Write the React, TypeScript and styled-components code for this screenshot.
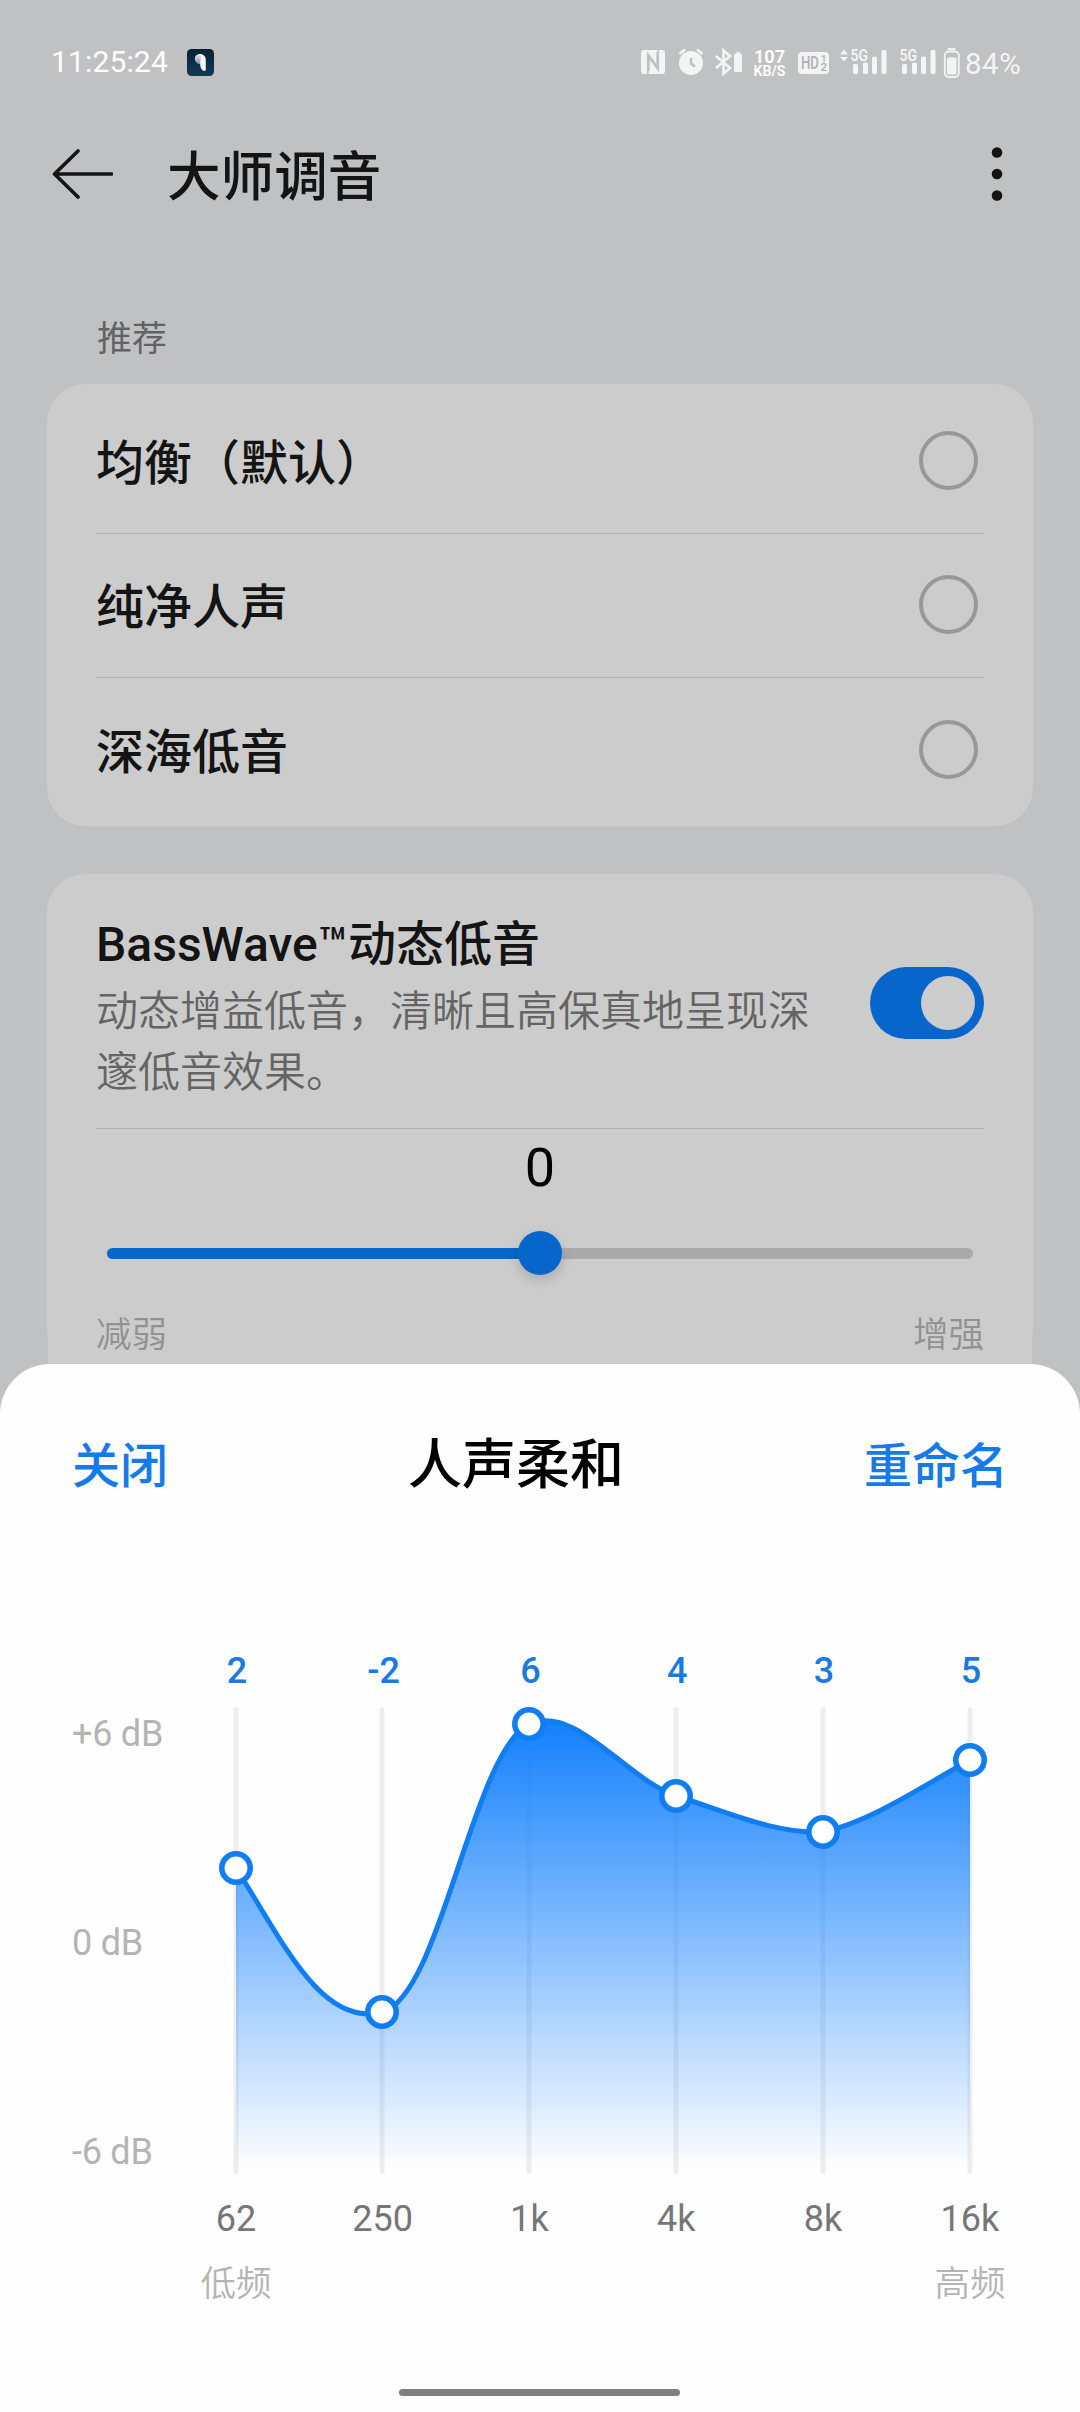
import React from 'react';
import styled, { createGlobalStyle } from 'styled-components';

const GlobalStyle = createGlobalStyle`
  * { box-sizing: border-box; }
  body {
    margin: 0;
    font-family: Roboto, 'Noto Sans CJK SC', sans-serif;
    -webkit-font-smoothing: antialiased;
  }
`;

const Screen = styled.div`
  position: relative;
  width: 1080px;
  height: 2412px;
  overflow: hidden;
  background: #c0c1c3;
  color: #141414;
`;

const StatusBar = styled.header`
  display: flex;
  align-items: center;
  height: 124px;
  padding: 0 50px 0 51px;
  color: #fff;
`;

const Clock = styled.span`
  width: 136px;
  font-size: 30px;
  letter-spacing: 0.15px;
  line-height: 36px;
  white-space: nowrap;
`;

const StatusIcons = styled.div`
  display: flex;
  align-items: center;
  margin-left: auto;
`;

const BatteryLevel = styled.span`
  width: 66px;
  padding: 4px 0 0 1px;
  color: #f3f4f4;
  font-size: 29.5px;
  letter-spacing: 0.5px;
  line-height: 36px;
  white-space: nowrap;
`;

const TopBar = styled.div`
  display: flex;
  align-items: center;
  height: 100px;
  padding: 0 59px 0 51px;
`;

const PageTitle = styled.h1`
  margin: 0 auto 0 54px;
  padding-top: 8px;
  font-size: 53.6px;
  font-weight: 500;
  line-height: 80px;
`;

const SectionLabel = styled.div`
  padding: 90px 0 0 97px;
  height: 160px;
  color: #626364;
  font-size: 35px;
  line-height: 52px;
`;

const Card = styled.section`
  margin: 0 47px;
  background: #ccc;
  border-radius: 38px;
`;

const PresetCard = styled(Card)`
  height: 442px;
  padding: 6px 49px 4px;
`;

const PresetRow = styled.div`
  display: flex;
  align-items: center;
  justify-content: space-between;
  height: 144px;
  padding: 0 6px 5px 0;
  border-bottom: 1px solid #b2b2b2;
  font-size: 48px;
  font-weight: 500;

  &:last-child {
    border-bottom: 0;
  }
`;

const Radio = styled.span`
  width: 59px;
  height: 59px;
  margin-top: 3px;
  border: 4px solid #989898;
  border-radius: 50%;
`;

const BassCard = styled(Card)`
  margin-top: 48px;
`;

const BassHeader = styled.div`
  display: flex;
  align-items: center;
  justify-content: space-between;
  height: 255px;
  margin: 0 49px;
  padding-top: 3px;
  border-bottom: 1px solid #b2b2b2;
`;

const BassText = styled.div`
  width: 722px;
  padding-top: 7px;
`;

const BassTitle = styled.div`
  font-size: 48px;
  font-weight: 500;
  line-height: 72px;
  white-space: nowrap;
`;

const BassDescription = styled.div`
  color: #646464;
  font-size: 42px;
  font-weight: 350;
  line-height: 61px;
`;

const Switch = styled.span`
  display: flex;
  justify-content: flex-end;
  width: 114px;
  height: 72px;
  padding: 9px;
  border-radius: 36px;
  background: #0766cc;
`;

const SwitchKnob = styled.span`
  width: 54px;
  height: 54px;
  border-radius: 50%;
  background: #ccc;
`;

const SliderPanel = styled.div`
  margin: 0 1px;
  padding: 0 48px;
  height: 240px;
  background: #ccc;
`;

const SliderValue = styled.div`
  height: 102px;
  padding-top: 7px;
  color: #000;
  font-size: 54px;
  line-height: 64px;
  text-align: center;
`;

const SliderTrack = styled.div`
  display: flex;
  align-items: center;
  height: 44px;
  margin: 0 11px;
`;

const TrackPart = styled.span<{ $filled?: boolean }>`
  flex: 1;
  height: 11px;
  border-radius: ${(p) => (p.$filled ? '6px 0 0 6px' : '0 6px 6px 0')};
  background: ${(p) => (p.$filled ? '#0766cc' : '#aaa')};
`;

const SliderThumb = styled.span`
  z-index: 1;
  width: 44px;
  height: 44px;
  margin: 0 -2px;
  border-radius: 50%;
  background: #0766cc;
  box-shadow: 0 5px 12px rgba(0, 0, 0, 0.16);
`;

const SliderEnds = styled.div`
  display: flex;
  justify-content: space-between;
  padding-top: 33px;
  color: #919191;
  font-size: 35.5px;
  font-weight: 350;
  line-height: 54px;
`;

const Sheet = styled.section`
  position: absolute;
  left: 0;
  right: 0;
  bottom: 0;
  z-index: 2;
  display: flex;
  flex-direction: column;
  height: 1048px;
  border-radius: 50px 50px 0 0;
  background: #fefefe;
`;

const SheetHeader = styled.div`
  display: flex;
  align-items: center;
  justify-content: space-between;
  height: 200px;
  padding: 0 72px 5px;
`;

const SheetTitle = styled.h2`
  margin: -2px 0 0;
  color: #000;
  font-size: 54px;
  font-weight: 500;
`;

const TextButton = styled.button`
  padding: 0;
  border: 0;
  background: none;
  color: #147be8;
  font-family: inherit;
  font-size: 48px;
  font-weight: 500;
`;

const Equalizer = styled.div`
  display: grid;
  grid-template-columns: 91px 881px;
  padding: 86px 0 0 72px;
`;

const BandRow = styled.div`
  grid-column: 2;
  display: grid;
  grid-template-columns: repeat(6, 146.8px);
  text-align: center;
`;

const GainRow = styled(BandRow)`
  height: 50px;
  padding-left: 0.5px;
  color: #1a7ae2;
  font-size: 36px;
  font-weight: 500;
  line-height: 42px;
`;

const Scale = styled.div`
  display: flex;
  flex-direction: column;
  justify-content: space-between;
  height: 460px;
  margin-top: 13px;
  color: #b4b4b4;
  font-size: 36px;
  letter-spacing: -0.25px;
  line-height: 42px;
  white-space: nowrap;
`;

const FrequencyRow = styled(BandRow)`
  margin: 20px 0 0 -0.5px;
  color: #767676;
  font-size: 36px;
  line-height: 42px;
`;

const RangeRow = styled(BandRow)`
  margin: 17px 0 0 -0.5px;
  color: #b4b4b4;
  font-size: 35.5px;
  font-weight: 350;
  line-height: 54px;
`;

const HomeIndicator = styled.div`
  width: 281px;
  height: 7px;
  margin: auto 400px 16px 399px;
  border-radius: 4px;
  background: #7f7f7f;
`;

const presets = ['均衡（默认）', '纯净人声', '深海低音'];

const bands = [
  { frequency: '62', gain: 2, range: '低频' },
  { frequency: '250', gain: -2, range: '' },
  { frequency: '1k', gain: 6, range: '' },
  { frequency: '4k', gain: 4, range: '' },
  { frequency: '8k', gain: 3, range: '' },
  { frequency: '16k', gain: 5, range: '高频' },
];

const bandX = (i: number) => Math.floor(73 + i * 146.8);
const gainY = (gain: number) => 24 + (6 - gain) * 36;

const curve =
  'M73 168 C120 242 159 328 219 312 C278 297 309 53 366 24 ' +
  'C413 4 462 78 513 96 C562 111 611 134 660 132 C709 121 758 87 807 60';

function EqualizerChart() {
  return (
    <svg width="881" height="478" viewBox="0 0 881 478">
      <defs>
        <linearGradient id="area" gradientUnits="userSpaceOnUse" x1="0" y1="18" x2="0" y2="470">
          <stop offset="0" stopColor="#1280fc" />
          <stop offset="1" stopColor="#1280ff" stopOpacity="0" />
        </linearGradient>
      </defs>
      {bands.map((b, i) => (
        <rect key={b.frequency} x={bandX(i) - 2.5} y="7" width="5" height="467" rx="2.5" fill="#eee" />
      ))}
      <path d={`${curve} V474 H73 Z`} fill="url(#area)" />
      <path d={curve} fill="none" stroke="#107ef2" strokeWidth="5" />
      {bands.map((b, i) => (
        <circle
          key={b.frequency}
          cx={bandX(i)}
          cy={gainY(b.gain)}
          r="14.2"
          fill="#fff"
          stroke="#107ef2"
          strokeWidth="5.6"
        />
      ))}
    </svg>
  );
}

function EarbudBadge() {
  return (
    <svg width="27" height="27" viewBox="0 0 27 27">
      <defs>
        <linearGradient id="badge" x1="0" y1="0" x2="0" y2="1">
          <stop offset="0" stopColor="#092234" />
          <stop offset="1" stopColor="#12395a" />
        </linearGradient>
        <linearGradient id="bud" x1="0" y1="0" x2="0" y2="1">
          <stop offset="0" stopColor="#e6edf5" />
          <stop offset="1" stopColor="#7d94ad" />
        </linearGradient>
      </defs>
      <rect width="27" height="27" rx="4.5" fill="url(#badge)" />
      <path d="M13 5 C9.500 5 7.800 7.500 7.800 9.800 C7.800 12.500 10.500 15.300 13.800 15.300 V5 Z" fill="url(#bud)" />
      <path d="M12 5 C16 4.500 18.800 7 18.800 11 V20.500 Q18.800 22 17.300 22 C14.300 21.300 13 18 13.200 14 C13.300 10 14.500 7 12 5 Z" fill="#f3f6fb" />
    </svg>
  );
}

/* System indicators, drawn on one strip so their spacing stays fixed. */
function SystemIndicators() {
  return (
    <svg width="326" height="34" viewBox="0 0 326 34" fill="#f3f4f4" fontFamily="Roboto, sans-serif">
      <rect x="3" y="5" width="24" height="24" rx="3" />
      <path d="M10.300 26 V10.500 L19.700 23 V7" fill="none" stroke="#c0c1c3" strokeWidth="2.8" />
      <path d="M9.800 26 V29 M20.200 5 V8" fill="none" stroke="#c0c1c3" strokeWidth="1.8" />

      <circle cx="53" cy="18" r="12" />
      <path d="M41.5 9 L47 4.500 M64.500 9 L59 4.500" stroke="#f3f4f4" strokeWidth="2.6" fill="none" />
      <path d="M53 13 V18.500 L57 21.500" stroke="#c0c1c3" strokeWidth="2.6" fill="none" />

      <path d="M78 11 L92 23 L85.500 28.500 V5.500 L92 11 L78 23" fill="none" stroke="#f3f4f4" strokeWidth="2.7" />
      <path d="M96 10 q0 -1.500 1.500 -1.500 h1 v-1.500 h3 v1.500 h1 q1.500 0 1.500 1.500 V25.500 q0 1.500 -1.500 1.500 h-5 q-1.500 0 -1.500 -1.500 Z" />

      <text x="116" y="17.500" fontSize="18.500" fontWeight="600" textLength="31" lengthAdjust="spacingAndGlyphs" fill="#fff">107</text>
      <text x="115.500" y="30.700" fontSize="14" fontWeight="600" textLength="32" lengthAdjust="spacingAndGlyphs" fill="#fff">KB/S</text>

      <rect x="160" y="7" width="31" height="22" rx="4" />
      <text x="163" y="24.200" fontSize="17.500" fontWeight="600" textLength="18" lengthAdjust="spacingAndGlyphs" fill="#b2b3b5">HD</text>
      <text x="183" y="16.800" fontSize="9.500" fontWeight="600" fill="#b2b3b5">1</text>
      <text x="182.500" y="26" fontSize="11.500" fontWeight="600" fill="#b2b3b5">2</text>

      <path d="M202 9.500 L206 4.500 L210 9.500 Z M202 12 L206 16.500 L210 12 Z" />
      <text x="212.500" y="16" fontSize="16.500" fontWeight="600" textLength="17.500" lengthAdjust="spacingAndGlyphs">5G</text>
      <rect x="215" y="19" width="5" height="10" rx="1.5" />
      <rect x="225" y="17.500" width="5" height="11.500" rx="1.5" />
      <rect x="234" y="11.500" width="5" height="17.500" rx="1.5" />
      <rect x="243.500" y="5" width="5" height="24" rx="1.5" />

      <text x="261.500" y="16" fontSize="16.500" fontWeight="600" textLength="17.500" lengthAdjust="spacingAndGlyphs">5G</text>
      <rect x="264" y="19" width="5" height="10" rx="1.5" />
      <rect x="274" y="17.500" width="5" height="11.500" rx="1.5" />
      <rect x="283" y="11.500" width="5" height="17.500" rx="1.5" />
      <rect x="292.500" y="5" width="5" height="24" rx="1.5" />

      <rect x="309.500" y="3" width="8" height="2" rx="1" />
      <rect x="306.800" y="6.500" width="14" height="25.500" rx="4" fill="none" stroke="#f3f4f4" strokeWidth="1.8" />
      <rect x="309" y="12.500" width="9.500" height="17" rx="1.5" />
    </svg>
  );
}

function BackArrow() {
  return (
    <svg width="62" height="54" viewBox="0 0 62 54" fill="none" stroke="#141414" strokeWidth="3.6" strokeLinecap="round" strokeLinejoin="round">
      <path d="M60.500 27 H3.500 M27 4 L3.500 27 L27 50" />
    </svg>
  );
}

function MoreDots() {
  return (
    <svg width="48" height="60" viewBox="0 0 48 60" fill="#141414">
      <circle cx="24" cy="8.500" r="5.300" />
      <circle cx="24" cy="30" r="5.300" />
      <circle cx="24" cy="51.500" r="5.300" />
    </svg>
  );
}

export default function App() {
  return (
    <Screen>
      <GlobalStyle />
      <StatusBar>
        <Clock>11:25:24</Clock>
        <EarbudBadge />
        <StatusIcons>
          <SystemIndicators />
          <BatteryLevel>84%</BatteryLevel>
        </StatusIcons>
      </StatusBar>
      <TopBar>
        <BackArrow />
        <PageTitle>大师调音</PageTitle>
        <MoreDots />
      </TopBar>

      <SectionLabel>推荐</SectionLabel>
      <PresetCard>
        {presets.map((name) => (
          <PresetRow key={name}>
            {name}
            <Radio />
          </PresetRow>
        ))}
      </PresetCard>

      <BassCard>
        <BassHeader>
          <BassText>
            <BassTitle>BassWave™动态低音</BassTitle>
            <BassDescription>动态增益低音，清晰且高保真地呈现深邃低音效果。</BassDescription>
          </BassText>
          <Switch>
            <SwitchKnob />
          </Switch>
        </BassHeader>
        <SliderPanel>
          <SliderValue>0</SliderValue>
          <SliderTrack>
            <TrackPart $filled />
            <SliderThumb />
            <TrackPart />
          </SliderTrack>
          <SliderEnds>
            <span>减弱</span>
            <span>增强</span>
          </SliderEnds>
        </SliderPanel>
      </BassCard>

      <Sheet>
        <SheetHeader>
          <TextButton>关闭</TextButton>
          <SheetTitle>人声柔和</SheetTitle>
          <TextButton>重命名</TextButton>
        </SheetHeader>
        <Equalizer>
          <GainRow>
            {bands.map((b) => (
              <span key={b.frequency}>{b.gain}</span>
            ))}
          </GainRow>
          <Scale>
            <span>+6 dB</span>
            <span>0 dB</span>
            <span>-6 dB</span>
          </Scale>
          <EqualizerChart />
          <FrequencyRow>
            {bands.map((b) => (
              <span key={b.frequency}>{b.frequency}</span>
            ))}
          </FrequencyRow>
          <RangeRow>
            {bands.map((b) => (
              <span key={b.frequency}>{b.range}</span>
            ))}
          </RangeRow>
        </Equalizer>
        <HomeIndicator />
      </Sheet>
    </Screen>
  );
}
